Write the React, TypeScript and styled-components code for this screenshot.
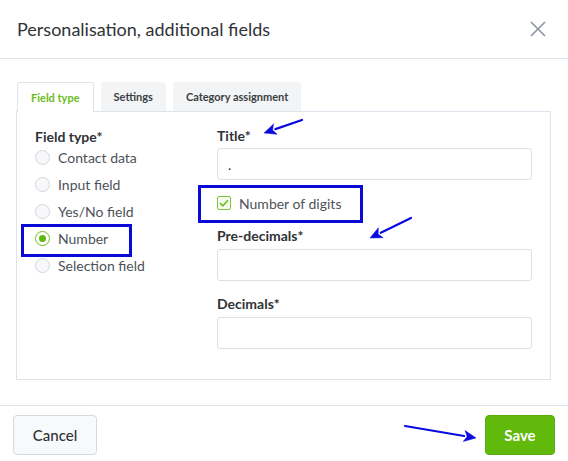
import styled, { createGlobalStyle } from 'styled-components';

const GlobalStyle = createGlobalStyle`
  html, body {
    margin: 0;
    padding: 0;
    background: #ffffff;
  }
  body {
    font-family: Lato, "Liberation Sans", sans-serif;
    color: #333;
  }
  * {
    box-sizing: border-box;
  }
`;

const Dialog = styled.div`
  position: relative;
  width: 568px;
  height: 461px;
  background: #fff;
  display: flex;
  flex-direction: column;
  overflow: hidden;
`;

const Header = styled.header`
  height: 59px;
  flex-shrink: 0;
  display: flex;
  align-items: center;
  justify-content: space-between;
  padding: 0 20px 0 17px;
  border-bottom: 1px solid #dfe4ec;
`;

const Title = styled.h1`
  margin: 0;
  font-size: 18px;
  font-weight: 400;
  color: #2f3337;
`;

const CloseButton = styled.button`
  border: 0;
  background: none;
  padding: 0;
  width: 20px;
  height: 20px;
  display: flex;
  align-items: center;
  justify-content: center;
  cursor: pointer;
`;

const Body = styled.div`
  padding: 23px 17px 0 16px;
`;

const TabBar = styled.div`
  display: flex;
  gap: 7px;
  height: 29px;
  margin-left: 1px;
`;

const Tab = styled.div<{ $active?: boolean }>`
  height: ${(p) => (p.$active ? '30px' : '29px')};
  padding: 0 13px;
  display: flex;
  align-items: center;
  font-size: 11px;
  font-weight: 700;
  color: ${(p) => (p.$active ? '#6cbd1c' : '#3a3f44')};
  background: ${(p) => (p.$active ? '#fff' : '#f3f4f6')};
  border: ${(p) => (p.$active ? '1px solid #dfe4ec' : '0')};
  border-bottom: 0;
  border-radius: 3px 3px 0 0;
  position: relative;
  z-index: 1;
`;

const Panel = styled.div`
  border: 1px solid #dfe4ec;
  height: 269px;
  display: flex;
  padding: 14px 18px 0 18px;
`;

const LeftColumn = styled.div`
  width: 183px;
  display: flex;
  flex-direction: column;
`;

const RightColumn = styled.div`
  flex: 1;
  display: flex;
  flex-direction: column;
`;

const Label = styled.div<{ $gap?: number; $after?: number }>`
  font-size: 14px;
  font-weight: 700;
  color: #2f3337;
  line-height: 20px;
  margin-top: ${(p) => p.$gap ?? 0}px;
  margin-bottom: ${(p) => p.$after ?? 3}px;
`;

const RadioRow = styled.label`
  height: 27px;
  display: flex;
  align-items: center;
  gap: 8px;
  font-size: 14px;
  color: #4d5257;
`;

const RadioCircle = styled.span<{ $checked?: boolean }>`
  width: 15px;
  height: 15px;
  border-radius: 50%;
  border: 1px solid ${(p) => (p.$checked ? '#6cbd1c' : '#d3d6da')};
  background: ${(p) => (p.$checked ? '#fff' : '#f7f8f9')};
  display: flex;
  align-items: center;
  justify-content: center;
  &::after {
    content: '';
    width: 7px;
    height: 7px;
    border-radius: 50%;
    background: #5fb80f;
    display: ${(p) => (p.$checked ? 'block' : 'none')};
  }
`;

const TextInput = styled.div`
  height: 32px;
  width: 315px;
  border: 1px solid #dcdfe3;
  border-radius: 3px;
  display: flex;
  align-items: center;
  padding: 0 10px;
  font-size: 14px;
  color: #333;
`;

const CheckRow = styled.label`
  height: 20px;
  margin-top: 13px;
  display: flex;
  align-items: center;
  gap: 8px;
  font-size: 14px;
  color: #4d5257;
`;

const CheckBox = styled.span`
  width: 14px;
  height: 14px;
  border: 1px solid #7cc63a;
  border-radius: 2px;
  background: #f4faee;
  display: flex;
  align-items: center;
  justify-content: center;
`;

const Footer = styled.footer`
  margin-top: 25px;
  border-top: 1px solid #dfe4ec;
  padding: 9px 13px 6px 13px;
  display: flex;
  justify-content: space-between;
`;

const Button = styled.button<{ $primary?: boolean }>`
  height: 40px;
  padding: 0 18px;
  min-width: ${(p) => (p.$primary ? '70px' : '84px')};
  border-radius: 4px;
  font-family: inherit;
  font-size: 15px;
  font-weight: ${(p) => (p.$primary ? 700 : 500)};
  color: ${(p) => (p.$primary ? '#fff' : '#2f3337')};
  background: ${(p) => (p.$primary ? '#60b90b' : '#f8f9fa')};
  border: 1px solid ${(p) => (p.$primary ? '#5aae0a' : '#d6d9dd')};
`;

const Highlight = styled.div`
  position: absolute;
  border: 3px solid #0a0ad8;
  pointer-events: none;
`;

const Overlay = styled.svg`
  position: absolute;
  left: 0;
  top: 0;
  pointer-events: none;
`;

const fieldTypes = ['Contact data', 'Input field', 'Yes/No field', 'Number', 'Selection field'];

const Arrow = ({ x1, y1, x2, y2 }: { x1: number; y1: number; x2: number; y2: number }) => {
  const dx = x2 - x1;
  const dy = y2 - y1;
  const len = Math.hypot(dx, dy);
  const ux = dx / len;
  const uy = dy / len;
  const hl = 12;
  const hw = 5.5;
  const bx = x2 - ux * hl;
  const by = y2 - uy * hl;
  const px = -uy;
  const py = ux;
  return (
    <g fill="#0a0ae0" stroke="#0a0ae0">
      <line x1={x1} y1={y1} x2={bx} y2={by} strokeWidth={2.2} strokeLinecap="round" />
      <polygon
        points={`${x2},${y2} ${bx + px * hw},${by + py * hw} ${bx + ux * 3},${by + uy * 3} ${bx - px * hw},${by - py * hw}`}
        strokeWidth={0.5}
      />
    </g>
  );
};

export default function App() {
  return (
    <>
      <GlobalStyle />
      <Dialog>
        <Header>
          <Title>Personalisation, additional fields</Title>
          <CloseButton aria-label="Close">
            <svg width="16" height="16" viewBox="0 0 16 16">
              <path d="M1 1 L15 15 M15 1 L1 15" stroke="#8b95a1" strokeWidth="1.6" />
            </svg>
          </CloseButton>
        </Header>
        <Body>
          <TabBar>
            <Tab $active>Field type</Tab>
            <Tab>Settings</Tab>
            <Tab>Category assignment</Tab>
          </TabBar>
          <Panel>
            <LeftColumn>
              <Label $gap={1} $after={-3}>Field type*</Label>
              {fieldTypes.map((t) => (
                <RadioRow key={t}>
                  <RadioCircle $checked={t === 'Number'} />
                  {t}
                </RadioRow>
              ))}
            </LeftColumn>
            <RightColumn>
              <Label $after={2}>Title*</Label>
              <TextInput>.</TextInput>
              <CheckRow>
                <CheckBox>
                  <svg width="10" height="8" viewBox="0 0 10 8">
                    <path d="M1 4 L3.8 6.8 L9 1.2" stroke="#6cbd1c" strokeWidth="1.5" fill="none" />
                  </svg>
                </CheckBox>
                Number of digits
              </CheckRow>
              <Label $gap={13}>Pre-decimals*</Label>
              <TextInput />
              <Label $gap={13}>Decimals*</Label>
              <TextInput />
            </RightColumn>
          </Panel>
        </Body>
        <Footer>
          <Button>Cancel</Button>
          <Button $primary>Save</Button>
        </Footer>

        <Highlight style={{ left: 21, top: 224, width: 111, height: 33 }} />
        <Highlight style={{ left: 198, top: 185, width: 165, height: 38 }} />
        <Overlay width="568" height="461">
          <Arrow x1={302} y1={120} x2={264} y2={133} />
          <Arrow x1={411} y1={218} x2={370} y2={238} />
          <Arrow x1={405} y1={426} x2={476} y2={438} />
        </Overlay>
      </Dialog>
    </>
  );
}
